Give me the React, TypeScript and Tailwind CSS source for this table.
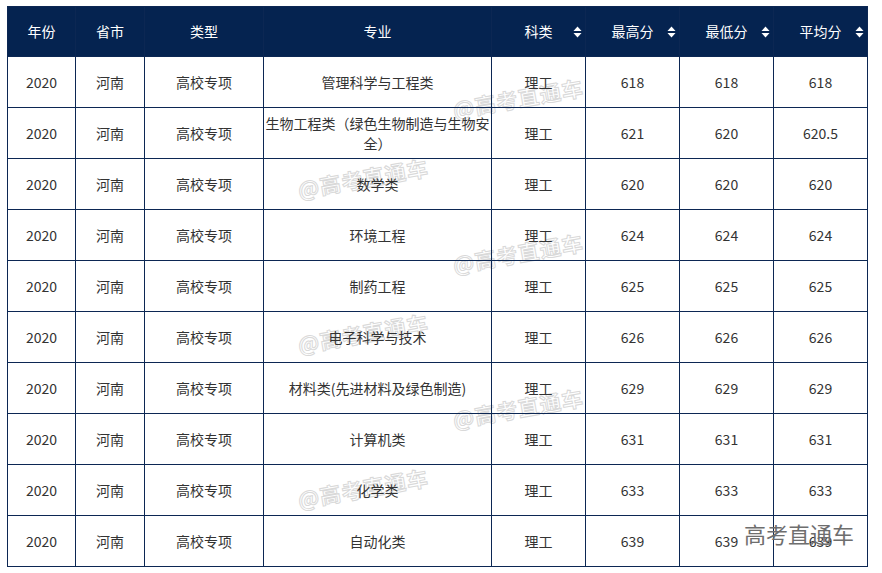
import React from 'react';

const rows = [
  ['管理科学与工程类', '618', '618', '618'],
  ['生物工程类（绿色生物制造与生物安全）', '621', '620', '620.5'],
  ['数学类', '620', '620', '620'],
  ['环境工程', '624', '624', '624'],
  ['制药工程', '625', '625', '625'],
  ['电子科学与技术', '626', '626', '626'],
  ['材料类(先进材料及绿色制造)', '629', '629', '629'],
  ['计算机类', '631', '631', '631'],
  ['化学类', '633', '633', '633'],
  ['自动化类', '639', '639', '639'],
];

// watermark spots, sitting under the table text
const marks = [
  { left: 'left-[452px]', top: 'top-[88px]' },
  { left: 'left-[297px]', top: 'top-[168px]' },
  { left: 'left-[452px]', top: 'top-[243px]' },
  { left: 'left-[297px]', top: 'top-[323px]' },
  { left: 'left-[452px]', top: 'top-[398px]' },
  { left: 'left-[297px]', top: 'top-[478px]' },
];

function SortIcon() {
  return (
    <svg className="absolute right-[3px] top-1/2 -translate-y-1/2" width="9" height="12" viewBox="0 0 9 12">
      <path d="M4.5 0.5 L8.5 5 L0.5 5 Z" fill="#ffffff" />
      <path d="M4.5 11.5 L8.5 7 L0.5 7 Z" fill="#ffffff" />
    </svg>
  );
}

export default function App() {
  const th = 'border border-[#0c2753] h-[50px] text-center font-normal text-white text-[14px] relative p-0';
  const td = 'border border-[#0c2753] h-[51px] text-center text-[14px] text-[#333333] px-[1px] py-0 leading-[20px]';

  return (
    <div className="relative w-[882px] h-[573px] bg-white overflow-hidden pt-[6px] pl-[7px] font-['Microsoft_YaHei','Noto_Sans_CJK_SC',sans-serif]">
      {marks.map((m, i) => (
        <div
          key={i}
          className={`absolute z-0 ${m.left} ${m.top} -rotate-[10deg] text-[21px] font-bold leading-none tracking-[1px] whitespace-nowrap text-white [-webkit-text-stroke:1px_#d9d9d9] pointer-events-none`}
        >
          @高考直通车
        </div>
      ))}

      <table className="relative z-10 border-collapse table-fixed w-[861px]">
        <colgroup>
          <col className="w-[68px]" />
          <col className="w-[69px]" />
          <col className="w-[119px]" />
          <col className="w-[228px]" />
          <col className="w-[94px]" />
          <col className="w-[94px]" />
          <col className="w-[94px]" />
          <col className="w-[94px]" />
        </colgroup>
        <thead>
          <tr className="bg-[#052350]">
            <th className={th}>年份</th>
            <th className={th}>省市</th>
            <th className={th}>类型</th>
            <th className={th}>专业</th>
            <th className={th}>科类<SortIcon /></th>
            <th className={th}>最高分<SortIcon /></th>
            <th className={th}>最低分<SortIcon /></th>
            <th className={th}>平均分<SortIcon /></th>
          </tr>
        </thead>
        <tbody>
          {rows.map((r, i) => (
            <tr key={i}>
              <td className={td}>2020</td>
              <td className={td}>河南</td>
              <td className={td}>高校专项</td>
              <td className={td}>{r[0]}</td>
              <td className={td}>理工</td>
              <td className={td}>{r[1]}</td>
              <td className={td}>{r[2]}</td>
              <td className={td}>{r[3]}</td>
            </tr>
          ))}
        </tbody>
      </table>

      <div className="absolute z-20 left-[744px] top-[520px] text-[22px] leading-[26px] text-[#6e6e6e] whitespace-nowrap">
        高考直通车
      </div>
    </div>
  );
}
